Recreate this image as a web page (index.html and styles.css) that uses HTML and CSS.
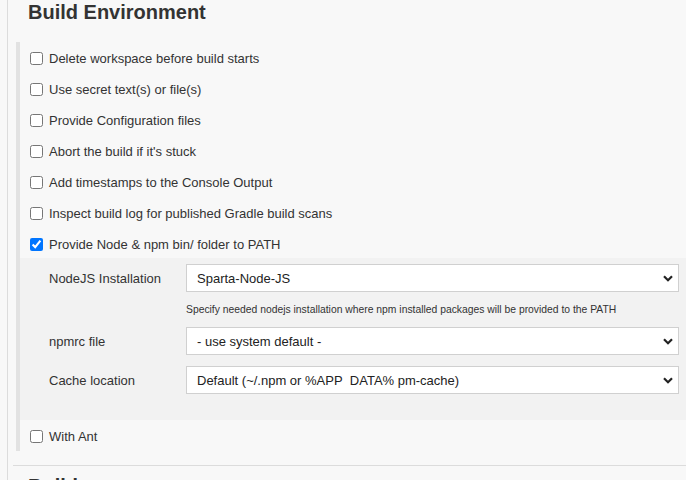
FILE: index.html
```html
<!DOCTYPE html>
<html>
<head>
<meta charset="utf-8">
<link rel="stylesheet" href="styles.css">
</head>
<body>
<div class="page">
  <section class="section">
    <h2 class="title">Build Environment</h2>
    <div class="group">
      <label class="opt"><input type="checkbox"><span>Delete workspace before build starts</span></label>
      <label class="opt"><input type="checkbox"><span>Use secret text(s) or file(s)</span></label>
      <label class="opt"><input type="checkbox"><span>Provide Configuration files</span></label>
      <label class="opt"><input type="checkbox"><span>Abort the build if it's stuck</span></label>
      <label class="opt"><input type="checkbox"><span>Add timestamps to the Console Output</span></label>
      <label class="opt"><input type="checkbox"><span>Inspect build log for published Gradle build scans</span></label>
      <label class="opt"><input type="checkbox" checked><span>Provide Node &amp; npm bin/ folder to PATH</span></label>
      <div class="nested">
        <div class="field-label">NodeJS Installation</div>
        <div class="select-wrap">
          <select class="select"><option>Sparta-Node-JS</option></select>
          <svg class="chev" width="10" height="7" viewBox="0 0 10 7"><path d="M1 1.2 L5 5.2 L9 1.2" fill="none" stroke="#222" stroke-width="2.2"/></svg>
        </div>
        <div></div>
        <div class="help">Specify needed nodejs installation where npm installed packages will be provided to the PATH</div>
        <div class="field-label">npmrc file</div>
        <div class="select-wrap">
          <select class="select"><option>- use system default -</option></select>
          <svg class="chev" width="10" height="7" viewBox="0 0 10 7"><path d="M1 1.2 L5 5.2 L9 1.2" fill="none" stroke="#222" stroke-width="2.2"/></svg>
        </div>
        <div class="field-label row-gap">Cache location</div>
        <div class="select-wrap row-gap">
          <select class="select"><option>Default (~/.npm or %APP&nbsp; DATA% pm-cache)</option></select>
          <svg class="chev" width="10" height="7" viewBox="0 0 10 7"><path d="M1 1.2 L5 5.2 L9 1.2" fill="none" stroke="#222" stroke-width="2.2"/></svg>
        </div>
      </div>
      <label class="opt"><input type="checkbox"><span>With Ant</span></label>
    </div>
  </section>
  <hr class="sep">
  <h2 class="title">Build</h2>
</div>
</body>
</html>
```
FILE: styles.css
```css
html, body {
  margin: 0;
  padding: 0;
  background: #f8f8f8;
  height: 100%;
  overflow: hidden;
}
body {
  font-family: "Liberation Sans", Arial, sans-serif;
  color: #333;
  font-size: 13px;
}
.page {
  margin-left: 7px;
  border-left: 1px solid #dcdcdc;
  min-height: 100%;
}
.title {
  margin: 0;
  padding-left: 20px;
  font-size: 20px;
  line-height: 24px;
  font-weight: bold;
  color: #333;
}
.section .title {
  margin-bottom: 18px;
}
.group {
  margin-left: 8px;
  border-left: 4px solid #e2e2e2;
}
.opt {
  display: flex;
  align-items: center;
  height: 31px;
  box-sizing: border-box;
  padding: 2px 0 0 10px;
  gap: 6px;
  color: #333;
}
.opt input {
  margin: 0;
  width: 13px;
  height: 13px;
}
.nested {
  background: #f2f2f2;
  display: grid;
  grid-template-columns: 137px 1fr;
  padding: 6px 7px 26px 29px;
  margin-top: -1px;
  align-items: center;
}
.field-label {
  color: #333;
}
.row-gap {
  margin-top: 11px;
}
.select-wrap {
  position: relative;
}
.select {
  display: block;
  width: 100%;
  height: 28px;
  appearance: none;
  -webkit-appearance: none;
  background: #fff;
  border: 1px solid #d0d0d0;
  border-radius: 0;
  padding: 0 30px 0 10px;
  font-family: "Liberation Sans", Arial, sans-serif;
  font-size: 13px;
  color: #222;
}
.chev {
  position: absolute;
  right: 6px;
  top: 11px;
}
.help {
  font-size: 10.35px;
  line-height: 13px;
  padding: 11px 0;
  color: #333;
}
.sep {
  margin: 14px 0 8px 5px;
  border: 0;
  border-top: 1px solid #dcdcdc;
  height: 0;
}
```
